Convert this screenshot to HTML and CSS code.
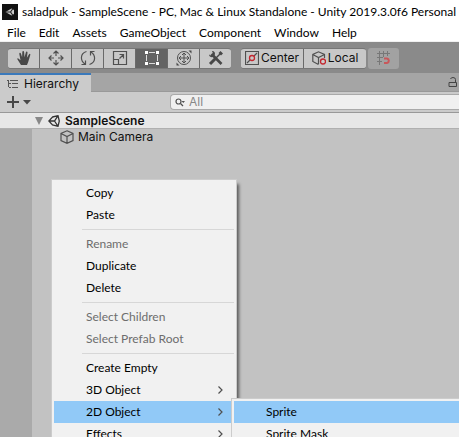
FILE: index.html
```html
<!DOCTYPE html>
<html lang="en">
<head>
<meta charset="utf-8">
<title>saladpuk - SampleScene</title>
<link rel="stylesheet" href="styles.css">
</head>
<body>
<header class="titlebar">
  <svg class="app-icon" width="16" height="16" viewBox="0 0 16 16"><rect width="16" height="16" fill="#111"/><path d="M3.500 8L9.500 4.500L12 6V10L9.500 11.500Z" fill="#ccc"/><path d="M3.500 8H8.500L11 4.500M8.500 8L11 11.500" fill="none" stroke="#222" stroke-width="1.200"/></svg>
  <span>saladpuk - SampleScene - PC, Mac &amp; Linux Standalone - Unity 2019.3.0f6 Personal -</span>
</header>
<nav class="menubar">
  <button>File</button><button>Edit</button><button>Assets</button><button>GameObject</button><button>Component</button><button>Window</button><button>Help</button>
</nav>
<div class="toolbar">
  <div class="group tools">
    <button aria-label="Hand"><svg width="16" height="16" viewBox="0 0 16 16"><path d="M5 15L1.500 9.500Q.8 8.200 2 8.200L4.500 10.300L3.300 4Q3.200 2.700 4 2.700Q4.700 2.700 5 3.800L6.100 7.300L6.300 2Q6.400 1 7.200 1Q8 1 8.100 2L8.500 7.200L9.900 2.200Q10.200 1.300 10.900 1.500Q11.600 1.700 11.500 2.700L10.900 7.800L12.900 4.400Q13.500 3.600 14.100 4Q14.600 4.400 14.200 5.300L12.200 12L11 15Z" fill="#484848"/></svg></button>
    <button aria-label="Move"><svg width="16" height="16" viewBox="0 0 16 16"><path d="M8 1V6M8 10V15M1 8H6M10 8H15M5.500 3.500L8 1L10.500 3.500M5.500 12.500L8 15L10.500 12.500M3.500 5.500L1 8L3.500 10.500M12.500 5.500L15 8L12.500 10.500" class="ln"/></svg></button>
    <button aria-label="Rotate"><svg width="16" height="16" viewBox="0 0 16 16"><path d="M6.500 1.500C0 3.500 0 10.500 5 14M1.500 14.500H5.500V10.500M9.500 14.500C16 12.500 16 5.500 11 2M14.500 1.500H10.500V5.500" class="ln"/></svg></button>
    <button aria-label="Scale"><svg width="16" height="16" viewBox="0 0 16 16"><path d="M1.500 1.500H14.500V14.500H1.500ZM1.500 9.500H6.500V14.500M7.500 8.500L11.500 4.500M7.500 4.500H11.500V8.500" class="ln"/></svg></button>
    <button class="on" aria-label="Rect"><svg width="16" height="16" viewBox="0 0 16 16"><path d="M5 2.500H11M5 13.500H11M2.500 5V11M13.500 5V11" stroke="#ddd"/><path d="M1 1H4V4H1ZM12 1H15V4H12ZM1 12H4V15H1ZM12 12H15V15H12Z" fill="#fff"/></svg></button>
    <button aria-label="Transform"><svg width="16" height="16" viewBox="0 0 16 16"><circle cx="8" cy="8" r="6.500" class="ln thin"/><path d="M8 3V13M3 8H13M6 5L8 3L10 5M6 11L8 13L10 11M5 6L3 8L5 10M11 6L13 8L11 10" class="ln thin"/><path d="M12.500 .5H15.500V3.500ZM.5 12.500V15.500H3.500Z" fill="#484848"/></svg></button>
    <button aria-label="Custom tools"><svg width="16" height="16" viewBox="0 0 16 16"><path d="M3.500 4L13.500 14" stroke="#484848" stroke-width="2.600"/><path d="M2 14L8 8" stroke="#484848" stroke-width="3"/><path d="M8 8L13 3" stroke="#484848" stroke-width="1.500"/><path d="M1 4.500L3 5.500L5 3.500L4 1C7 1 7.500 3.500 6.500 5.500L5 7C3 7.500 1 6.500 1 4.500ZM12.500 1L15 3.500L13 5.500L10.500 3Z" fill="#484848"/></svg></button>
  </div>
  <div class="group pivots">
    <button><svg width="14" height="14" viewBox="0 0 14 14"><path d="M.5 .5H13.500V13.500H.5ZM2 12L5 9M9 5L12 2" class="ln"/><circle cx="7" cy="7" r="2.500" fill="none" stroke="#c3272f" stroke-width="1.300"/></svg>Center</button>
    <button><svg width="14" height="14" viewBox="0 0 14 14"><path d="M12.500 7V3.500L6.500 .8L.8 3.500V10.500L6.500 13.500M.8 3.500L6.500 6.500L12.500 3.500M6.500 6.500V13" class="ln"/><circle cx="11" cy="10.500" r="2.500" fill="#ccc" stroke="#c3272f" stroke-width="1.300"/></svg>Local</button>
  </div>
  <button class="snap" disabled aria-label="Grid snapping"><svg width="14" height="14" viewBox="0 0 14 14"><path d="M2.500 0V14M6.500 0V6M10.500 0V5M0 2.500H13M0 6.500H6M0 10.500H5" fill="none" stroke="#777"/><path d="M7 7.500H10A2.300 2.300 0 0 1 10 12H7" fill="none" stroke="#c9575a" stroke-width="2"/></svg></button>
</div>
<div class="tabs">
  <button class="tab"><svg width="12" height="10" viewBox="0 0 12 10"><path d="M0 1.500H2M3 1.500H11M2 4.500H4M5 4.500H11M2 8.500H4M5 8.500H11M1.500 2V8" fill="none" stroke="#555"/></svg>Hierarchy</button>
  <svg class="lock" width="10" height="11" viewBox="0 0 10 11"><path d="M1 5.500H8.500V9.500H1ZM7.500 5V2.500Q7.500 .5 5 .5Q3 .5 2.500 2" fill="none" stroke="#444"/></svg>
</div>
<div class="filter">
  <button class="add" aria-label="Create"><svg width="24" height="12" viewBox="0 0 24 12"><path d="M6 0V12M0 6H12" stroke="#484848" stroke-width="2"/><path d="M16 4H24L20 8.500Z" fill="#484848"/></svg></button>
  <label class="search"><svg width="10" height="9" viewBox="0 0 10 9"><circle cx="3.500" cy="3.500" r="2.500" class="ln"/><path d="M5.500 5.500L8 8" class="ln"/><path d="M6.500 3H10L8.300 5Z" fill="#555"/></svg><input type="text" placeholder="All" aria-label="Search"></label>
</div>
<main class="tree">
  <div class="scene"><svg width="8" height="8" viewBox="0 0 8 8"><path d="M0 0H8L4 8Z" fill="#888"/></svg><svg width="12" height="12" viewBox="0 0 12 12"><path d="M4.500 2L10 .7L11.300 6L10 11.300L4.500 10L.8 6ZM.8 6H6.500L10 .7M6.500 6L10 11.300" fill="none" stroke="#333" stroke-width="1.300"/></svg><b>SampleScene</b></div>
  <div class="content">
    <div class="object"><svg width="14" height="14" viewBox="0 0 14 14"><path d="M7 .8L13 3.500V10.500L7 13.300L1 10.500V3.500ZM1 3.500L7 6.500L13 3.500M7 6.500V13" class="ln"/></svg>Main Camera</div>
  </div>
</main>
<div class="popup context">
  <button>Copy</button><button>Paste</button><hr>
  <button disabled>Rename</button><button>Duplicate</button><button>Delete</button><hr>
  <button disabled>Select Children</button><button disabled>Select Prefab Root</button><hr>
  <button>Create Empty</button>
  <button>3D Object<svg width="5" height="8" viewBox="0 0 5 8"><path d="M.5 .5L4 4L.5 7.500" class="ln"/></svg></button>
  <button class="hot">2D Object<svg width="5" height="8" viewBox="0 0 5 8"><path d="M.5 .5L4 4L.5 7.500" class="ln"/></svg></button>
  <button>Effects<svg width="5" height="8" viewBox="0 0 5 8"><path d="M.5 .5L4 4L.5 7.500" class="ln"/></svg></button>
</div>
<div class="popup submenu">
  <button class="hot">Sprite</button><button>Sprite Mask</button>
</div>
</body>
</html>
```
FILE: styles.css
```css
* { box-sizing: border-box; }
html, body { height: 100%; }
body {
  margin: 0;
  position: relative;
  display: flex;
  flex-direction: column;
  overflow: hidden;
  background: #c2c2c2;
  color: #000;
  font: 12px/16px Lato, "Noto Sans", sans-serif;
}
button, input { font: inherit; color: inherit; border: 0; padding: 0; margin: 0; background: none; }
svg { flex: none; display: block; }
.ln { fill: none; stroke: #505050; stroke-width: 1.2; }
.thin { stroke-width: 1; }

.titlebar { display: flex; align-items: center; gap: 4px; height: 24px; padding-left: 2px; background: #fff; white-space: nowrap; }
.menubar { display: flex; gap: 13px; height: 18px; padding: 0 7px; background: #fff; border-bottom: 1px solid #f0f0f0; }

.toolbar { display: flex; align-items: center; height: 31px; padding: 1px 8px 0; background: #8a8a8a; font-family: Inter, sans-serif; color: #111; }
.group { display: flex; height: 21px; gap: 1px; border: solid #777; border-width: 1px 0; border-radius: 3px; background: #6a6a6a; overflow: hidden; }
.group button { display: flex; align-items: center; justify-content: center; background: #c8c8c8; }
.tools button { width: 31px; }
.tools .on { background: #636363; }
.pivots { margin-left: 10px; }
.pivots button { width: 62px; gap: 2px; }
.snap { display: flex; align-items: center; justify-content: center; width: 31px; height: 21px; margin-left: 2px; border-radius: 3px; background: #a2a2a2; }

.tabs { display: flex; align-items: center; justify-content: space-between; height: 19px; padding-right: 1px; background: #a5a5a5; border-bottom: 1px solid #999; }
.tab { display: flex; align-items: center; gap: 5px; width: 91px; height: 19px; margin-bottom: -1px; padding-left: 7px; background: #cbcbcb; border-top: 2px solid #3a79bb; font-family: Inter, sans-serif; font-size: 12px; color: #111; }
.filter { display: flex; align-items: center; gap: 139px; height: 21px; padding-left: 7px; background: #cbcbcb; border-bottom: 1px solid #999; }
.search { display: flex; align-items: center; gap: 4px; flex: 1; height: 16px; padding-left: 4px; background: #f0f0f0; border: 1px solid #aaa; border-right: 0; border-radius: 4px 0 0 4px; font-family: Inter, sans-serif; font-size: 12px; }
.search input { flex: 1; min-width: 0; height: 14px; outline: 0; }
.search input::placeholder { color: #888; opacity: 1; }

.tree { flex: 1; display: flex; flex-direction: column; font-family: Inter, sans-serif; font-size: 12px; color: #111; }
.scene { display: flex; align-items: center; gap: 5px; height: 16px; padding-left: 35px; background: #e7e7e7; border-bottom: 1px solid #b0b0b0; }
.scene b { font-weight: 600; }
.content { flex: 1; border-left: 32px solid #aaa; }
.object { display: flex; align-items: center; gap: 4px; height: 16px; padding-left: 28px; }

.popup { position: absolute; padding: 2px; background: #f1f1f1; border: 1px solid #ccc; box-shadow: 3px 4px 3px -1px #0008; }
.context { left: 51px; top: 179px; width: 186px; }
.submenu { left: 231px; top: 398px; right: 0; padding-right: 0; border-right: 0; box-shadow: none; }
.popup button { display: flex; align-items: center; justify-content: space-between; width: 100%; height: 22px; padding: 0 11px 0 32px; }
.popup button:disabled { color: #6d6d6d; }
.popup .hot { background: #91c9f7; }
.popup hr { height: 1px; margin: 3px 0 3px 28px; border: 0; background: #d7d7d7; }
```
